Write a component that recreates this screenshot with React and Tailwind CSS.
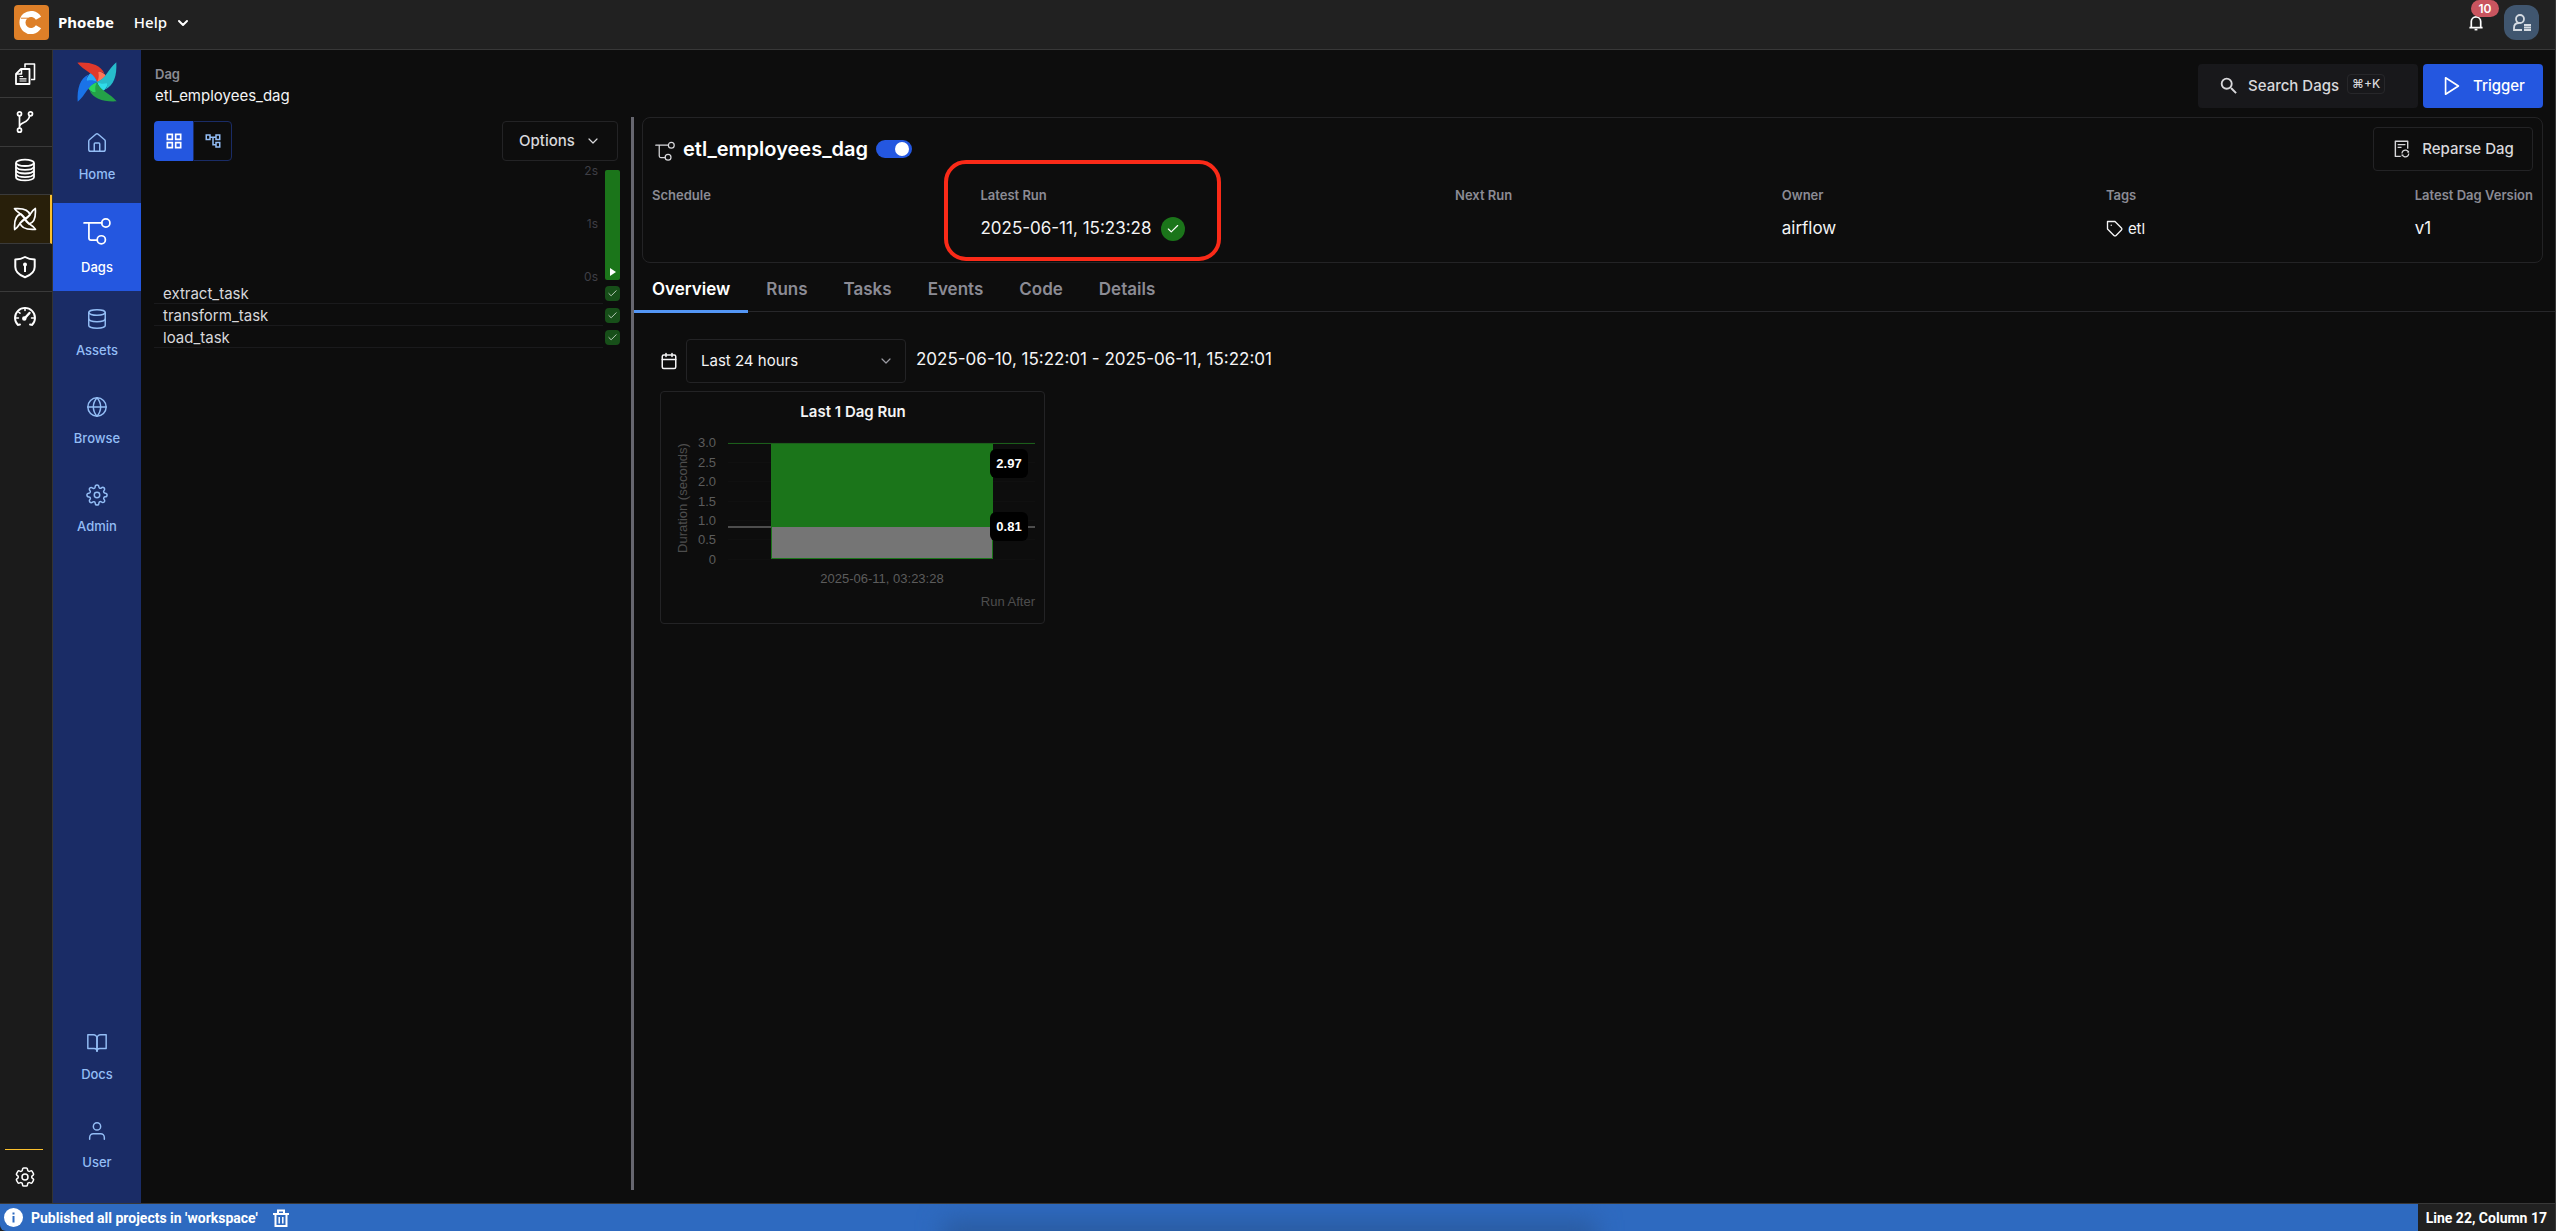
import { useState } from "react";
import clsx from "clsx";
import { House } from "lucide-react";
import { AiOutlineFileSync } from "react-icons/ai";
import { FiBookOpen, FiCalendar, FiCheck, FiChevronDown, FiDatabase, FiGlobe, FiPlay, FiSettings, FiTag, FiUser } from "react-icons/fi";
import { HiOutlineCog6Tooth } from "react-icons/hi2";
import { MdOutlineAccountTree, MdOutlineGridView, MdSearch } from "react-icons/md";

const DagIcon = ({ className, strokeWidth = 1.6 }) => (
	<svg className={className} viewBox="0 0 26 26" fill="none" stroke="currentColor" strokeWidth={strokeWidth} strokeLinecap="round">
		<path d="M1 5.5h16.5M5.5 5.5v14a2 2 0 0 0 2 2h5.7" />
		<circle cx="21.2" cy="5.5" r="3.8" />
		<circle cx="17" cy="21.2" r="3.8" />
	</svg>
);

const blades = [
	{ turn: "rotate(0 58 58)", dark: "#e0392b", light: "#ff7557" },
	{ turn: "rotate(90 58 58)", dark: "#27bccb", light: "#2fdcea" },
	{ turn: "rotate(180 58 58)", dark: "#24a148", light: "#2bd45d" },
	{ turn: "rotate(270 58 58)", dark: "#1a73e8", light: "#2aa9f8" },
];

const AirflowLogo = () => (
	<svg className="size-10" viewBox="-1 -1 118 118">
		{blades.map((blade) => (
			<g key={blade.turn} transform={blade.turn}>
				<path fill={blade.light} d="M61 24C72 28 81 34 84 39C78 48 70 54 58 58Z" />
				<path fill={blade.dark} d="M0 1C40 -1 68 8 80 33C72 28 66 26 62 29C64 40 64 48 58 58C48 30 20 26 0 1Z" />
			</g>
		))}
	</svg>
);

const FilesIcon = () => (
	<svg className="size-6" viewBox="0 0 24 24" fill="none" stroke="currentColor" strokeWidth="1.8" strokeLinejoin="round">
		<path d="M8 7h8.5v15H3V12z" />
		<path d="M8.5 7v5H3" strokeWidth="1.5" />
		<path d="M12 5.5V2h9.5v15.5H18" strokeWidth="1.6" />
		<path d="M6.5 14.5h3.5M6.500 16.8h7M6.5 19h7" strokeWidth="1.2" />
	</svg>
);

const BranchIcon = () => (
	<svg className="size-6" viewBox="0 0 24 24" fill="none" stroke="currentColor" strokeWidth="1.7">
		<circle cx="6.5" cy="3.8" r="2" />
		<circle cx="17.5" cy="3.8" r="2" />
		<circle cx="6.5" cy="20.2" r="2" />
		<path d="M6.5 6v12M6.5 16.5c0-4 9.5-3.5 10-10.5" />
	</svg>
);

const StackIcon = () => (
	<svg className="size-6" viewBox="0 0 24 24" fill="none" stroke="currentColor" strokeWidth="1.8">
		<ellipse cx="12" cy="4.8" rx="9" ry="3.2" />
		<path d="M3 5v14.2c0 1.8 4 3.2 9 3.2s9-1.4 9-3.2V5" />
		<path d="M3 8.8c1 2 4.5 3 9 3s8-1 9-3M3 12.5c1 2 4.5 3 9 3s8-1 9-3M3 16.2c1 2 4.5 3 9 3s8-1 9-3" />
	</svg>
);

const PinwheelIcon = () => (
	<svg className="size-6" viewBox="-6 -6 128 128" fill="none" stroke="currentColor" strokeWidth="9" strokeLinejoin="round">
		{blades.map((blade) => (
			<path key={blade.turn} transform={blade.turn} d="M2 3C42 0 78 8 84 36L58 58C52 32 16 28 2 3Z" />
		))}
	</svg>
);

const ShieldIcon = () => (
	<svg className="size-6" viewBox="0 0 24 24" fill="none" stroke="currentColor" strokeWidth="2" strokeLinejoin="round">
		<path d="M12 2C9 3.8 5.5 4.5 2.3 4.5V12c0 5 4.5 8.3 9.7 10.3C17.2 20.3 21.7 17 21.7 12V4.500C18.5 4.5 15 3.8 12 2z" />
		<circle cx="12" cy="9.5" r="2" fill="currentColor" stroke="none" />
		<path d="M12 9.5V17" />
	</svg>
);

const GaugeIcon = () => (
	<svg className="size-6" viewBox="0 0 24 24" fill="none" stroke="currentColor" strokeWidth="1.9" strokeLinecap="round">
		<path d="M7 20.5 5 21A10 10 0 1 1 19 21L17 20.5" />
		<path d="M12 4v2.5M5.5 8l1.5 1.2M3 14h2.5M21 14h-2.5" strokeWidth="1.5" />
		<path d="M11.500 14.5 16.5 9" strokeWidth="2.4" />
		<circle cx="11.3" cy="14.6" r="1.3" fill="currentColor" />
	</svg>
);

const railItems = [
	{ name: "Files", icon: FilesIcon },
	{ name: "Git", icon: BranchIcon },
	{ name: "Database", icon: StackIcon },
	{ name: "Airflow", icon: PinwheelIcon, active: true },
	{ name: "Security", icon: ShieldIcon },
];

const TopBar = () => (
	<header className="h-[50px] shrink-0 flex items-center bg-[#212121] border-b border-[#383838] pl-3.5 pr-4 pb-1 text-white">
		<svg className="size-[35px]" viewBox="0 0 35 35">
			<rect width="35" height="35" rx="4" fill="#dd7f28" />
			<path d="M24.5 13.2A8.600 8.6 0 1 0 24.5 21.8" fill="none" stroke="#fff" strokeWidth="6" />
			<path d="M7 13.2h7" stroke="#dd7f28" strokeWidth="1" />
		</svg>
		<span className="ml-[9px] font-['Noto_Sans',sans-serif] font-bold text-[15px]">Phoebe</span>
		<button type="button" className="ml-5 flex items-center gap-2 font-['Noto_Sans',sans-serif] font-medium text-[15px]">
			Help
			<FiChevronDown className="size-4" strokeWidth={3} />
		</button>
		<div className="ml-auto flex items-center gap-5">
			<button type="button" aria-label="Notifications" className="relative">
				<svg className="size-4" viewBox="0 0 16 17" fill="none" stroke="currentColor" strokeWidth="1.8">
					<path d="M1 13.5h14M3 13V7a5 5 0 0 1 10 0v6" />
					<path d="M6.5 15.5h3" />
				</svg>
				<span className="absolute -top-[15px] left-[3px] h-[17px] w-7 rounded-full bg-[#c9555f] text-xs leading-[17px] font-semibold">10</span>
			</button>
			<button type="button" aria-label="Account" className="size-[35px] rounded-xl bg-[#40566f] text-[#d5dbe2] flex items-center justify-center">
				<svg className="size-5" viewBox="0 0 20 20" fill="none" stroke="currentColor" strokeWidth="1.8">
					<circle cx="8" cy="6" r="4" />
					<path d="M10 17H2v-2c0-3 2-5 5-5" />
					<path d="M12 12h7M12 14.5h7M12 17h7" strokeWidth="2" />
				</svg>
			</button>
		</div>
	</header>
);

const Rail = () => (
	<nav className="w-[53px] shrink-0 flex flex-col bg-[#1b1b1b] border-r border-[#333] text-white">
		<div className="h-[242px] grid grid-rows-5">
			{railItems.map(({ name, icon: Icon, active }) => (
				<button
					key={name}
					type="button"
					aria-label={name}
					className={clsx("flex items-center border-b border-b-[#3a3a3a] pl-[13px]", active && "bg-[#281f0a] border-r-2 border-r-[#fbc02d]")}
				>
					<Icon />
				</button>
			))}
		</div>
		<button type="button" aria-label="Metrics" className="h-12 pl-[13px]">
			<GaugeIcon />
		</button>
		<div className="mt-auto ml-[5px] w-[38px] border-t border-[#fbc02d]" />
		<button type="button" aria-label="Settings" className="h-[53px] pl-[13px]">
			<HiOutlineCog6Tooth className="size-6" />
		</button>
	</nav>
);

const NavItem = ({ icon: Icon, label, active, large }) => (
	<a
		href="#"
		className={clsx(
			"h-[88px] flex flex-col items-center justify-center text-[13px] leading-5 font-medium",
			active ? "bg-[#2457e0] text-white" : "text-[#93bdf5]",
			large ? "gap-3" : "gap-2.5 pb-0.5"
		)}
	>
		<Icon className={large ? "size-7" : "size-[22px]"} strokeWidth={1.6} />
		{label}
	</a>
);

const Sidebar = () => (
	<nav className="w-[88px] shrink-0 flex flex-col bg-[#1a2c66] pb-3">
		<div className="h-[65px] flex justify-center pt-3">
			<AirflowLogo />
		</div>
		<NavItem icon={House} label="Home" />
		<NavItem icon={DagIcon} label="Dags" active large />
		<NavItem icon={FiDatabase} label="Assets" />
		<NavItem icon={FiGlobe} label="Browse" />
		<NavItem icon={FiSettings} label="Admin" />
		<div className="mt-auto">
			<NavItem icon={FiBookOpen} label="Docs" />
			<NavItem icon={FiUser} label="User" />
		</div>
	</nav>
);

const PageHeader = () => (
	<div className="flex items-start justify-between pl-[14px] pr-3">
		<div>
			<p className="text-[13px] leading-5 font-semibold text-[#8b8b94]">Dag</p>
			<p className="text-[15px] leading-6 text-[#f4f4f5]">etl_employees_dag</p>
		</div>
		<div className="flex gap-[5px]">
			<button type="button" className="h-11 w-[220px] flex items-center rounded bg-[#18181b] pl-5 text-[15px] font-medium text-[#d8d8db]">
				<MdSearch className="size-[22px] mr-2" />
				Search Dags
				<kbd className="ml-2 mb-1 h-5 flex items-center rounded border border-[#27272a] px-1 font-['Inter','DejaVu_Sans',sans-serif] text-xs">⌘+K</kbd>
			</button>
			<button type="button" className="h-11 w-[120px] flex items-center gap-2.5 rounded bg-[#2457e0] pl-[18px] text-[15px] font-medium text-white">
				<FiPlay className="size-[22px]" strokeWidth={1.8} />
				Trigger
			</button>
		</div>
	</div>
);

const tasks = ["extract_task", "transform_task", "load_task"];

const GridPanel = () => (
	<section className="w-[490px] shrink-0 pt-1 pl-[13px] pr-[11px]">
		<div className="flex justify-between pr-0.5">
			<div className="flex h-10">
				<button type="button" aria-label="Grid view" className="w-[39px] flex items-center justify-center rounded-l bg-[#2457e0] text-white">
					<MdOutlineGridView className="size-5" />
				</button>
				<button type="button" aria-label="Graph view" className="w-[39px] flex items-center justify-center rounded-r border border-[#1a2c66] text-[#93bdf5]">
					<MdOutlineAccountTree className="size-[18px]" />
				</button>
			</div>
			<button type="button" className="h-10 w-[116px] flex items-center justify-center gap-2.5 rounded border border-[#232325] text-[15px] font-medium text-[#d8d8db]">
				Options
				<FiChevronDown className="size-4" strokeWidth={1.8} />
			</button>
		</div>
		<div className="mt-[3px] -mb-0.5 h-[120px] flex justify-end gap-[7px]">
			<div className="flex flex-col justify-between text-right text-xs leading-[14px] text-[#3f3f46]">
				<span>2s</span>
				<span>1s</span>
				<span>0s</span>
			</div>
			<button type="button" aria-label="Dag run" className="self-end mb-1 h-[110px] w-[15px] flex items-end justify-center rounded-xs bg-[#1b751a] pb-1">
				<svg className="w-[6px] h-2" viewBox="0 0 6 8">
					<path d="M0 0 6 4 0 8z" fill="#fff" />
				</svg>
			</button>
		</div>
		<ul>
			{tasks.map((task) => (
				<li key={task} className="h-[22px] flex items-end gap-0.5">
					<span className="h-[22px] flex-1 border-b border-[#1a1a1c] pl-[9px] text-[15px] leading-6 text-[#d8d8db]">{task}</span>
					<span className="mb-[3px] size-[15px] flex items-center justify-center rounded bg-[#174f19] text-[#c4d3c4]">
						<FiCheck className="size-[11px]" strokeWidth={2} />
					</span>
				</li>
			))}
		</ul>
	</section>
);

const Stat = ({ label, children }) => (
	<div className="relative">
		<p className="text-[13px] leading-5 font-semibold text-[#8b8b94]">{label}</p>
		<div className="mt-3 h-6 flex items-center text-[17px] text-[#f4f4f5]">{children}</div>
	</div>
);

const DagHeader = () => {
	const [enabled, setEnabled] = useState(true);

	return (
		<div className="ml-2 mr-3 h-[146px] rounded-lg border border-[#232325] px-[9px] pt-[9px]">
			<div className="flex items-start justify-between">
				<div className="pt-[3px] pl-[3px] flex items-center">
					<DagIcon className="size-5 mt-1 text-[#d8d8db]" />
					<h1 className="ml-2 text-xl leading-[38px] font-semibold text-white">etl_employees_dag</h1>
					<input
						type="checkbox"
						role="switch"
						aria-label="Toggle Dag"
						checked={enabled}
						onChange={(e) => setEnabled(e.target.checked)}
						className="ml-2 h-[18px] w-9 appearance-none rounded-full bg-[#3f3f46] checked:bg-[#2457e0] before:block before:size-[14px] before:m-0.5 before:rounded-full before:bg-white checked:before:ml-[19px]"
					/>
				</div>
				<button type="button" className="h-11 w-40 flex items-center justify-center gap-2.5 rounded border border-[#232325] text-[15px] font-medium text-[#d8d8db]">
					<AiOutlineFileSync className="size-5" />
					Reparse Dag
				</button>
			</div>
			<div className="mt-3.5 flex justify-between">
				<Stat label="Schedule" />
				<Stat label="Latest Run">
					<a href="#">2025-06-11, 15:23:28</a>
					<span className="ml-2.5 size-6 flex items-center justify-center rounded-full bg-[#1b751a] text-white">
						<FiCheck className="size-[14px]" strokeWidth={2} />
					</span>
					<span className="absolute -left-9 -right-9 -top-[25px] -bottom-5 rounded-[22px] border-4 border-[#fa2a18]" />
				</Stat>
				<Stat label="Next Run" />
				<Stat label="Owner">airflow</Stat>
				<Stat label="Tags">
					<FiTag className="size-[18px] mr-1" strokeWidth={1.8} />
					<span className="text-[15px]">etl</span>
				</Stat>
				<Stat label="Latest Dag Version">v1</Stat>
			</div>
		</div>
	);
};

const tabs = ["Overview", "Runs", "Tasks", "Events", "Code", "Details"];

const Tabs = () => {
	const [current, setCurrent] = useState("Overview");

	return (
		<div role="tablist" className="flex h-[49px] border-b border-[#27272a]">
			{tabs.map((tab) => (
				<button
					key={tab}
					type="button"
					role="tab"
					aria-selected={tab === current}
					onClick={() => setCurrent(tab)}
					className={clsx(
						"-mb-0.5 px-[18px] pt-1.5 border-b-3 text-[17px] font-semibold",
						tab === current ? "border-[#5396f5] text-white" : "border-transparent text-[#8b8b94]"
					)}
				>
					{tab}
				</button>
			))}
		</div>
	);
};

const yTicks = [
	{ label: "3.0", y: 50 },
	{ label: "2.5", y: 70 },
	{ label: "2.0", y: 89 },
	{ label: "1.5", y: 109 },
	{ label: "1.0", y: 128 },
	{ label: "0.5", y: 147 },
	{ label: "0", y: 167 },
];

const DurationChart = () => (
	<svg className="block w-full" viewBox="0 0 383 231" fontFamily="'Liberation Sans', Arial, sans-serif" fontSize="13">
		{yTicks.map((tick) => (
			<g key={tick.label}>
				<path d={`M67 ${tick.y + 0.5}H374`} stroke="#101010" />
				<text x="55" y={tick.y + 5} textAnchor="end" fill="#5c5c5c">{tick.label}</text>
			</g>
		))}
		<text transform="translate(26 106) rotate(-90)" textAnchor="middle" fill="#4d4d4d">Duration (seconds)</text>
		<rect x="110" y="51" width="222" height="116" fill="#1b751a" />
		<rect x="111" y="135" width="220" height="31" fill="#757575" />
		<path d="M67 51.5H374" stroke="#1b5e1a" />
		<path d="M67 135H110M332 135H374" stroke="#4d4d4d" strokeWidth="2" />
		<rect x="329" y="57" width="38" height="29" rx="6" fill="#000" />
		<rect x="329" y="120" width="38" height="29" rx="6" fill="#000" />
		<text x="348" y="76" textAnchor="middle" fill="#fff" fontWeight="700">2.97</text>
		<text x="348" y="139" textAnchor="middle" fill="#fff" fontWeight="700">0.81</text>
		<text x="221" y="191" textAnchor="middle" fill="#5c5c5c">2025-06-11, 03:23:28</text>
		<text x="374" y="214" textAnchor="end" fill="#4d4d4d">Run After</text>
		<text x="192" y="25" textAnchor="middle" fill="#f4f4f5" fontFamily="Inter, sans-serif" fontSize="15" fontWeight="600">Last 1 Dag Run</text>
	</svg>
);

const Overview = () => (
	<div className="pl-[26px] pt-[27px]">
		<div className="flex items-center text-[#f4f4f5]">
			<FiCalendar className="size-[18px]" strokeWidth={2} />
			<div className="relative ml-2">
				<select
					aria-label="Time range"
					defaultValue="24"
					className="h-11 w-[220px] appearance-none rounded border border-[#232325] bg-[#0d0d0d] pl-3.5 text-[15px] text-[#f4f4f5]"
				>
					<option value="1">Last 1 hour</option>
					<option value="24">Last 24 hours</option>
					<option value="168">Past week</option>
				</select>
				<FiChevronDown className="size-4 absolute right-3 top-3.5 text-[#9b9ba3] pointer-events-none" strokeWidth={1.8} />
			</div>
			<span className="ml-2.5 mb-0.5 text-[17px]">2025-06-10, 15:22:01 - 2025-06-11, 15:22:01</span>
		</div>
		<div className="mt-2 w-[385px] rounded border border-[#232325]">
			<DurationChart />
		</div>
	</div>
);

const StatusBar = () => (
	<footer className="h-7 shrink-0 flex items-stretch border-t border-[#383838] bg-[#212121] font-[Roboto,sans-serif] text-sm font-bold text-white">
		<div className="relative flex-1 flex items-center overflow-hidden rounded-bl-md bg-[#2e6ac0] pl-1">
			<div className="absolute left-[39%] right-[34%] top-4 -bottom-6 bg-[#2a5ba0] blur-md" />
			<svg className="relative size-[19px]" viewBox="0 0 19 19">
				<circle cx="9.5" cy="9.5" r="9.5" fill="#fff" />
				<path d="M9.5 8v6.5M9.5 4.5v2" stroke="#2e6ac0" strokeWidth="2" />
			</svg>
			<span className="relative ml-2">Published all projects in 'workspace'</span>
			<button type="button" aria-label="Clear" className="relative ml-[14px]">
				<svg className="size-[18px]" viewBox="0 0 18 18" fill="none" stroke="currentColor" strokeWidth="2">
					<path d="M1 5h16M3.5 5v12h11V5M6 5V1.500h6V5" />
					<path d="M7.2 8v6.5M10.8 8v6.5" strokeWidth="1.5" />
				</svg>
			</button>
		</div>
		<div className="flex items-center rounded-br-lg px-2">Line 22, Column 17</div>
	</footer>
);

const App = () => (
	<div className="h-screen flex flex-col bg-[#0d0d0d] font-['Inter',sans-serif] border-r border-[#383838]">
		<TopBar />
		<div className="flex-1 min-h-0 flex">
			<Rail />
			<Sidebar />
			<main className="flex-1 min-w-0 flex flex-col pt-3.5 pb-[13px]">
				<PageHeader />
				<div className="flex-1 min-h-0 mt-[9px] flex">
					<GridPanel />
					<div className="w-[3px] shrink-0 bg-[#66666f]" />
					<section className="flex-1 min-w-0">
						<DagHeader />
						<Tabs />
						<Overview />
					</section>
				</div>
			</main>
		</div>
		<StatusBar />
	</div>
);

export default App;
